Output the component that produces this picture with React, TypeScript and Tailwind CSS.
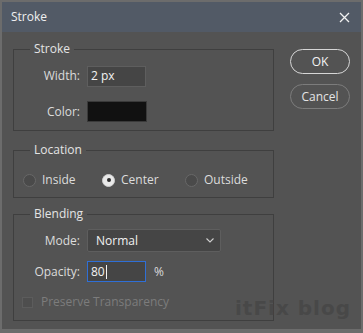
import { useState } from "react"

const font = { fontFamily: '"Open Sans", "Noto Sans", sans-serif' }

function Radio({ checked }: { checked?: boolean }) {
  return checked ? (
    <span className="flex h-[13px] w-[13px] items-center justify-center rounded-full border border-[#cfcfcf] bg-[#e9e9e9]">
      <span className="h-[4px] w-[4px] rounded-full bg-[#2e2e2e]" />
    </span>
  ) : (
    <span className="h-[13px] w-[13px] rounded-full border border-[#686868] bg-[#4a4a4a]" />
  )
}

function Group({ title, children, className }: { title: string; children: React.ReactNode; className?: string }) {
  return (
    <fieldset className={"border border-[#3f3f3f] " + (className ?? "")}>
      <legend className="ml-[16px] px-[4px] text-[12px] leading-[18px] text-[#e4e4e4]">{title}</legend>
      {children}
    </fieldset>
  )
}

export default function App() {
  const [location, setLocation] = useState("center")

  return (
    <div
      className="relative flex h-[333px] w-[363px] flex-col overflow-hidden border-2 border-b-4 border-[#6c6c6c] bg-[#535353]"
      style={font}
    >
      {/* Title bar */}
      <div className="flex h-[30px] shrink-0 items-center justify-between bg-[#525a66] pl-[9px] pr-[10px]">
        <span className="text-[12px] text-[#f0f0f0]">Stroke</span>
        <svg width="11" height="11" viewBox="0 0 11 11" className="mr-[1px]">
          <path d="M1 1 L10 10 M10 1 L1 10" stroke="#f2f2f2" strokeWidth="1.3" />
        </svg>
      </div>

      <div className="flex pl-[11px] pt-[8px]">
        <div className="flex w-[261px] flex-col">
          <Group title="Stroke">
            <div className="flex flex-col gap-[15px] pb-[8px] pt-[8px] text-[12px] text-[#dcdcdc]">
              <div className="flex h-[20px] items-center">
                <span className="w-[66px] text-right">Width:</span>
                <div className="ml-[7px] flex h-[21px] w-[59px] items-center border border-[#5e5e5e] bg-[#454545] pl-[3px] text-[#f2f2f2]">
                  2 px
                </div>
              </div>
              <div className="flex h-[21px] items-center">
                <span className="w-[66px] text-right">Color:</span>
                <div className="ml-[7px] h-[21px] w-[60px] border border-[#3a3a3a] bg-[#111111]" />
              </div>
            </div>
          </Group>

          <Group title="Location" className="mt-[10px]">
            <div className="flex pb-[8px] pl-[9px] pt-[12px] text-[12px] text-[#dcdcdc]">
              {[
                { id: "inside", label: "Inside", w: "w-[79px]" },
                { id: "center", label: "Center", w: "w-[83px]" },
                { id: "outside", label: "Outside", w: "w-[80px]" },
              ].map((o) => (
                <button
                  key={o.id}
                  onClick={() => setLocation(o.id)}
                  className={"flex h-[18px] items-center gap-[6px] " + o.w}
                >
                  <Radio checked={location === o.id} />
                  <span>{o.label}</span>
                </button>
              ))}
            </div>
          </Group>

          <Group title="Blending" className="mt-[7px]">
            <div className="flex flex-col pb-[9px] pt-[6px] text-[12px] text-[#dcdcdc]">
              <div className="flex h-[23px] items-center">
                <span className="w-[66px] text-right">Mode:</span>
                <div className="ml-[7px] flex h-[23px] w-[134px] items-center justify-between rounded-[2px] border border-[#5e5e5e] bg-[#454545] pl-[8px] pr-[6px] text-[#f2f2f2]">
                  <span>Normal</span>
                  <svg width="8" height="5" viewBox="0 0 8 5">
                    <path d="M0.5 0.5 L4 4 L7.5 0.5" fill="none" stroke="#cfcfcf" strokeWidth="1.1" />
                  </svg>
                </div>
              </div>
              <div className="mt-[9px] flex h-[21px] items-center">
                <span className="w-[66px] text-right">Opacity:</span>
                <div className="ml-[7px] flex h-[21px] w-[59px] items-center border border-[#2f6fd6] bg-[#454545] pl-[3px] text-[#f2f2f2]">
                  80
                  <span className="ml-[1px] h-[14px] w-[1px] bg-[#f2f2f2]" />
                </div>
                <span className="ml-[8px]">%</span>
              </div>
              <div className="mt-[11px] flex h-[18px] items-center pl-[8px] text-[#7c7c7c]">
                <span className="h-[11px] w-[11px] border border-[#5c5c5c] bg-[#4e4e4e]" />
                <span className="ml-[8px]">Preserve Transparency</span>
              </div>
            </div>
          </Group>
        </div>

        <div className="ml-[16px] mt-[9px] flex flex-col gap-[10px] text-[12px]">
          <button className="h-[25px] w-[60px] rounded-full border-[1.5px] border-[#d6d6d6] text-[#f4f4f4]">OK</button>
          <button className="h-[25px] w-[60px] rounded-full border border-[#7c7c7c] text-[#e4e4e4]">Cancel</button>
        </div>
      </div>

      {/* watermark */}
      <span
        className="pointer-events-none absolute left-[233px] top-[294px] whitespace-nowrap text-[20px] font-bold leading-[24px] tracking-[1px] text-[#484848]"
        style={{ fontFamily: '"DejaVu Sans", sans-serif' }}
      >
        itFix blog
      </span>
    </div>
  )
}
